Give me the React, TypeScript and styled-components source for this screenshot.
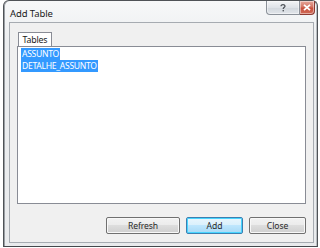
import React from "react";
import styled, { createGlobalStyle } from "styled-components";

const Global = createGlobalStyle`
  html, body { margin: 0; padding: 0; background: #ffffff; }
  body { font-family: "Noto Sans", "Open Sans", sans-serif; }
  #root { width: 320px; height: 248px; overflow: hidden; }
`;

const Window = styled.div`
  margin-left: 3px;
  width: 315px;
  height: 247px;
  box-sizing: border-box;
  border: 1px solid #4f5357;
  border-bottom-color: #44484c;
  border-radius: 6px 6px 0 0;
  background: linear-gradient(#f7f8f9, #eceef0 40px, #e9ebed);
  box-shadow: inset 1px 0 0 #9a9fa4, inset -1px 0 0 #b9bdc1;
  display: flex;
  flex-direction: column;
  padding: 0 3px 3px 5px;
`;

const TitleBar = styled.div`
  height: 21px;
  display: flex;
  align-items: flex-start;
  justify-content: space-between;
`;

const Title = styled.span`
  font-size: 9.5px;
  color: #1a1a1a;
  margin-top: 6px;
  margin-left: 1px;
  letter-spacing: -0.1px;
`;

const Caption = styled.div`
  display: flex;
  margin-right: -1px;
`;

const CapButton = styled.div<{ $close?: boolean }>`
  width: ${(p) => (p.$close ? "15px" : "34px")};
  height: 14px;
  box-sizing: border-box;
  border: 1px solid ${(p) => (p.$close ? "#8c3a32" : "#8a9098")};
  border-top: none;
  border-radius: ${(p) => (p.$close ? "0 0 4px 0" : "0 0 0 4px")};
  border-left: ${(p) => (p.$close ? "none" : "1px solid #8a9098")};
  background: ${(p) =>
    p.$close
      ? "linear-gradient(#e6a89c, #d47565 45%, #c9503d 55%, #d06a57)"
      : "linear-gradient(#f3f4f6, #dfe3e8 50%, #d3d8de 55%, #e1e5ea)"};
  display: flex;
  align-items: center;
  justify-content: center;
  box-shadow: inset 0 0 0 1px rgba(255,255,255,0.45);
`;

const Client = styled.div`
  flex: 1;
  box-sizing: border-box;
  border: 1px solid #a6abb1;
  background: #f0f0f0;
  padding: 9px 7px 8px 7px;
  display: flex;
  flex-direction: column;
`;

const TabRow = styled.div`
  display: flex;
  height: 14px;
  position: relative;
  z-index: 1;
`;

const Tab = styled.div`
  width: 34px;
  box-sizing: border-box;
  border: 1px solid #898c95;
  border-bottom: none;
  background: #ffffff;
  font-size: 8.8px;
  letter-spacing: -0.2px;
  color: #1a1a1a;
  display: flex;
  align-items: center;
  justify-content: center;
  padding-top: 1px;
  margin-left: 1px;
`;

const ListBox = styled.div`
  height: 158px;
  box-sizing: border-box;
  border: 1px solid #898c95;
  background: #ffffff;
  padding: 1px 3px;
  display: flex;
  flex-direction: column;
  align-items: flex-start;
`;

const Item = styled.div<{ $selected?: boolean }>`
  font-size: 8.6px;
  letter-spacing: -0.3px;
  line-height: 12px;
  height: 12px;
  padding: 0 1px;
  color: ${(p) => (p.$selected ? "#ffffff" : "#1a1a1a")};
  background: ${(p) => (p.$selected ? "#3399ff" : "transparent")};
  white-space: nowrap;
`;

const ButtonRow = styled.div`
  margin-top: 13px;
  display: flex;
  justify-content: flex-end;
  gap: 6px;
`;

const Button = styled.div<{ $w: number; $default?: boolean }>`
  width: ${(p) => p.$w}px;
  height: 17px;
  box-sizing: border-box;
  border: 1px solid ${(p) => (p.$default ? "#3c7fb1" : "#707070")};
  border-radius: 2px;
  background: ${(p) =>
    p.$default
      ? "linear-gradient(#eaf6fd, #d9f0fc 50%, #bee6fd 50%, #a7d9f5)"
      : "linear-gradient(#f2f2f2, #ebebeb 50%, #dddddd 50%, #cfcfcf)"};
  box-shadow: inset 0 0 0 1px ${(p) => (p.$default ? "#48d5ff" : "#f8f8f8")};
  font-size: 8.6px;
  letter-spacing: -0.1px;
  color: #2a2a2a;
  display: flex;
  align-items: center;
  justify-content: center;
`;

export default function App() {
  return (
    <>
      <Global />
      <Window>
        <TitleBar>
          <Title>Add Table</Title>
          <Caption>
            <CapButton>
              <svg width="6" height="8" viewBox="0 0 6 8">
                <path d="M1 2.2C1 1 2 0.6 3 0.6S5 1.2 5 2.2 3.2 3.4 3.2 5" fill="none" stroke="#4a4f55" strokeWidth="1.2" />
                <rect x="2.6" y="6" width="1.3" height="1.4" fill="#4a4f55" />
              </svg>
            </CapButton>
            <CapButton $close>
              <svg width="8" height="7" viewBox="0 0 8 7">
                <path d="M1 0.8L7 6.2M7 0.8L1 6.2" stroke="#ffffff" strokeWidth="1.8" />
              </svg>
            </CapButton>
          </Caption>
        </TitleBar>
        <Client>
          <TabRow>
            <Tab>Tables</Tab>
          </TabRow>
          <ListBox>
            <Item $selected>ASSUNTO</Item>
            <Item $selected>DETALHE_ASSUNTO</Item>
          </ListBox>
          <ButtonRow>
            <Button $w={74}>Refresh</Button>
            <Button $w={57} $default>Add</Button>
            <Button $w={57}>Close</Button>
          </ButtonRow>
        </Client>
      </Window>
    </>
  );
}
